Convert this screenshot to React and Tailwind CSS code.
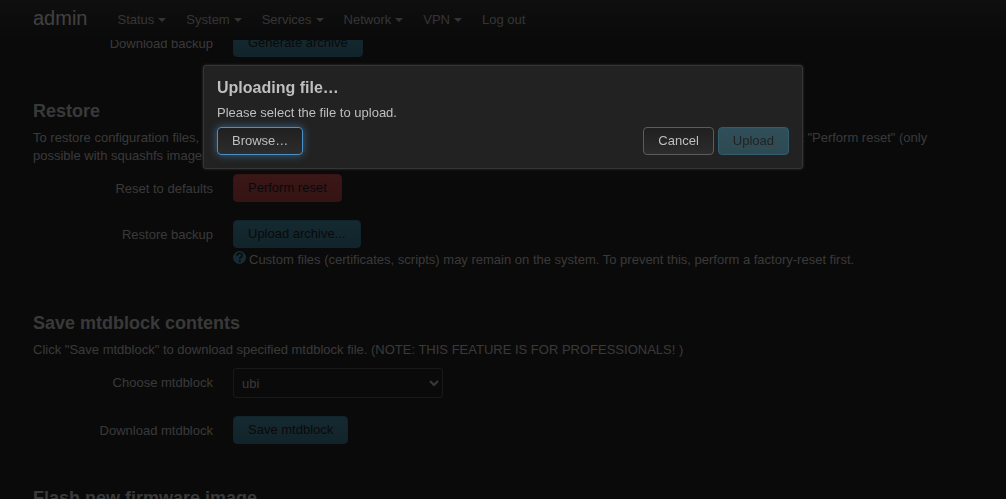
import React from "react";
import { clsx } from "clsx";

const MENU = [
  { label: "Status", menu: true },
  { label: "System", menu: true },
  { label: "Services", menu: true },
  { label: "Network", menu: true },
  { label: "VPN", menu: true },
  { label: "Log out", menu: false },
];

const VARIANTS = {
  neutral:
    "border-[#5c5c5c] bg-linear-to-b from-[#202020] to-[#2c2c2c] text-[#bfbfbf]",
  focused:
    "border-[#4a90c8] bg-linear-to-b from-[#202020] to-[#2c2c2c] text-[#bfbfbf] shadow-[0_0_8px_rgba(82,168,236,0.5)] outline-none",
  primary:
    "border-[#3f7a92] bg-linear-to-b from-[#468aa2] to-[#3e7a8f] text-[#222]",
  negative:
    "border-[#b84444] bg-linear-to-b from-[#c54d4d] to-[#b44444] text-[#222]",
  disabled:
    "border-[#325d70] bg-linear-to-b from-[#304f5b] to-[#2e4950] text-[#222]",
};

function Button({ variant, children, ...rest }) {
  return (
    <button
      type="button"
      className={clsx(
        "h-7 rounded-sm border px-3.5 text-[13px] leading-[18px] whitespace-nowrap",
        VARIANTS[variant]
      )}
      {...rest}
    >
      {children}
    </button>
  );
}

function Header() {
  return (
    <header className="fixed inset-x-0 top-0 z-10 flex h-10 items-center bg-linear-to-b from-[#333] to-[#222] px-[33px]">
      <a href="#home" className="mr-5 pb-1 text-xl text-[#d8d8d8]">
        admin
      </a>
      <nav className="flex">
        {MENU.map((item) => (
          <a
            key={item.label}
            href={"#" + item.label.toLowerCase().replace(" ", "-")}
            className="flex items-center gap-1 px-2.5 leading-[18px] text-[#b0b0b0]"
          >
            {item.label}
            {item.menu && (
              <svg width="8" height="4" viewBox="0 0 8 4" fill="currentColor" aria-hidden="true">
                <path d="M0 0h8L4 4z" />
              </svg>
            )}
          </a>
        ))}
      </nav>
    </header>
  );
}

function Section({ title, description, children }) {
  return (
    <section className="mb-9">
      {title && <h3 className="text-lg leading-9 font-bold">{title}</h3>}
      {description && <p className="mb-[9px]">{description}</p>}
      <div className="flex flex-col gap-[18px]">{children}</div>
    </section>
  );
}

function Row({ id, label, help, children }) {
  return (
    <div className="flex items-start gap-5">
      <label htmlFor={id} className="w-[180px] shrink-0 pt-[6px] text-right">
        {label}
      </label>
      <div className="min-w-0 flex-1">
        <div className="flex">{children}</div>
        {help && (
          <p className="flex items-center gap-[3px] pt-0.5 leading-[19px]">
            <svg className="mb-1" width="13" height="13" viewBox="0 0 13 13" aria-hidden="true">
              <circle cx="6.5" cy="6.5" r="6.5" fill="#4a90aa" />
              <path
                d="M4 4.8C4 3.2 5 2.3 6.6 2.3c1.4 0 2.4.8 2.4 2.1 0 1.8-2.3 1.7-2.3 3.9"
                fill="none"
                stroke="#222"
                strokeWidth="1.6"
              />
              <rect x="5.8" y="9.2" width="1.8" height="1.8" fill="#222" />
            </svg>
            {help}
          </p>
        )}
      </div>
    </div>
  );
}

function UploadDialog() {
  return (
    <div className="fixed inset-0 z-20 flex items-start justify-center bg-black/70 px-4 pt-[65px]">
      <div
        role="dialog"
        aria-modal="true"
        aria-labelledby="upload-title"
        className="w-full max-w-[600px] rounded-[3px] border border-[#363636] bg-[#222] p-[13px] text-[#bfbfbf] shadow-[0_0_3px_#333]"
      >
        <h4 id="upload-title" className="mb-[7px] text-base leading-[18px] font-bold">
          Uploading file…
        </h4>
        <p className="mb-[5px]">Please select the file to upload.</p>
        <div className="flex gap-1">
          <Button variant="focused">Browse…</Button>
          <span className="flex-1" />
          <Button variant="neutral">Cancel</Button>
          <Button variant="disabled" disabled>
            Upload
          </Button>
        </div>
      </div>
    </div>
  );
}

export default function App() {
  return (
    <div className="h-screen overflow-hidden bg-[#222] font-['Liberation_Sans',Arial,sans-serif] text-[13px] leading-[18px] text-[#bfbfbf]">
      <Header />
      <main className="px-[33px] pt-[29px]">
        <Section>
          <Row id="generate" label="Download backup">
            <Button id="generate" variant="primary">Generate archive</Button>
          </Row>
        </Section>
        <Section
          title="Restore"
          description={
            'To restore configuration files, you can upload a previously generated backup archive here. To reset the firmware to its initial state, click "Perform reset" (only possible with squashfs images).'
          }
        >
          <Row id="reset" label="Reset to defaults">
            <Button id="reset" variant="negative">Perform reset</Button>
          </Row>
          <Row
            id="restore"
            label="Restore backup"
            help="Custom files (certificates, scripts) may remain on the system. To prevent this, perform a factory-reset first."
          >
            <Button id="restore" variant="primary">Upload archive...</Button>
          </Row>
        </Section>
        <Section
          title="Save mtdblock contents"
          description={
            'Click "Save mtdblock" to download specified mtdblock file. (NOTE: THIS FEATURE IS FOR PROFESSIONALS! )'
          }
        >
          <Row id="mtdblock" label="Choose mtdblock">
            <select
              id="mtdblock"
              defaultValue="ubi"
              className="h-[30px] w-[210px] rounded-[3px] border border-[#555] bg-[#222] px-1 text-[13px] text-[#bfbfbf]"
            >
              <option value="ubi">ubi</option>
            </select>
          </Row>
          <Row id="save" label="Download mtdblock">
            <Button id="save" variant="primary">Save mtdblock</Button>
          </Row>
        </Section>
        <Section title="Flash new firmware image" />
      </main>
      <UploadDialog />
    </div>
  );
}
